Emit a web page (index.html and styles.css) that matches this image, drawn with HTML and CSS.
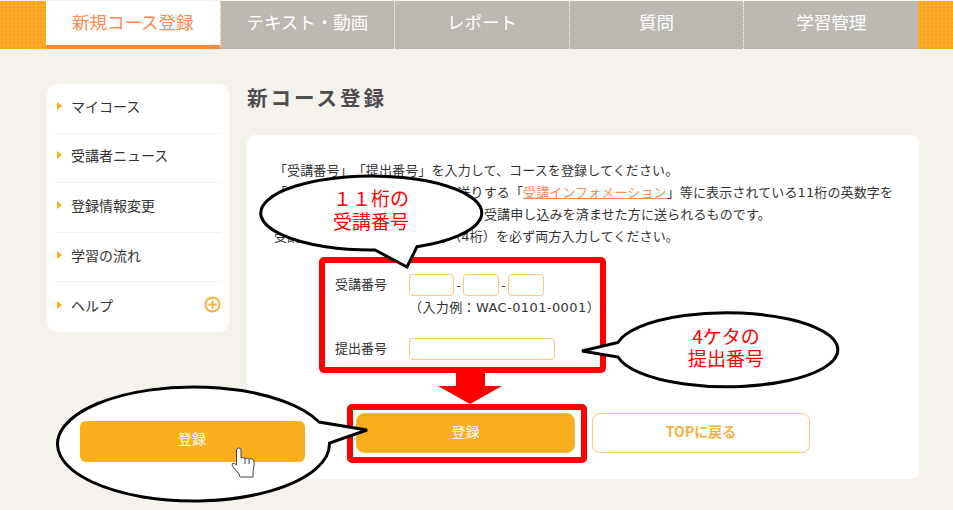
FILE: index.html
```html
<!DOCTYPE html>
<html lang="ja">
<head>
    <meta charset="UTF-8">
    <meta name="viewport" content="width=device-width, initial-scale=1.0">
    <title>新コース登録</title>
    <link rel="stylesheet" href="styles.css">
</head>
<body>
<div class="page">
    <header class="global-nav">
        <div class="nav-end nav-end-left"></div>
        <a class="nav-tab active" href="#">新規コース登録</a>
        <a class="nav-tab" href="#">テキスト・動画</a>
        <a class="nav-tab" href="#">レポート</a>
        <a class="nav-tab" href="#">質問</a>
        <a class="nav-tab last" href="#">学習管理</a>
        <div class="nav-end nav-end-right"></div>
    </header>

    <div class="content">
        <aside class="side-menu">
            <ul>
                <li><a href="#">マイコース</a></li>
                <li><a href="#">受講者ニュース</a></li>
                <li><a href="#">登録情報変更</a></li>
                <li><a href="#">学習の流れ</a></li>
                <li>
                    <a href="#">ヘルプ</a>
                    <svg class="plus-icon" width="17" height="17" viewBox="0 0 17 17">
                        <circle cx="8.5" cy="8.5" r="7" fill="none" stroke="#fbb03b" stroke-width="2"/>
                        <path d="M8.5 4.5v8M4.5 8.5h8" fill="none" stroke="#fbb03b" stroke-width="2"/>
                    </svg>
                </li>
            </ul>
        </aside>

        <main class="main">
            <h1>新コース登録</h1>
            <div class="card">
                <p class="lead">「受講番号」「提出番号」を入力して、コースを登録してください。</p>
                <p class="lead">「受講番号」は、当協会よりお送りする「<a href="#">受講インフォメーション</a>」等に表示されている11桁の英数字を</p>
                <p class="lead">「提出番号」は、インターネットで受講申し込みを済ませた方に送られるものです。</p>
                <p class="lead">受講番号（11桁）と提出番号（4桁）を必ず両方入力してください。</p>

                <form class="course-form">
                    <div class="form-row">
                        <label class="form-label">受講番号</label>
                        <div class="code-inputs">
                            <input class="field field-first" type="text">
                            <span class="hyphen">-</span>
                            <input class="field field-second" type="text">
                            <span class="hyphen">-</span>
                            <input class="field field-third" type="text">
                        </div>
                    </div>
                    <p class="form-note">（入力例：WAC-0101-0001）</p>
                    <div class="form-row form-row-submit">
                        <label class="form-label">提出番号</label>
                        <input class="field field-wide" type="text">
                    </div>
                    <div class="form-buttons">
                        <button class="btn btn-primary" type="button">登録</button>
                        <button class="btn btn-outline" type="button">TOPに戻る</button>
                    </div>
                </form>
            </div>
        </main>
    </div>

    <!-- 説明用の吹き出しと赤枠 -->
    <svg class="notes" width="953" height="510" viewBox="0 0 953 510">
        <rect class="red-box" x="322" y="260" width="281" height="110" rx="2"/>
        <rect class="red-box" x="350" y="407" width="234" height="53" rx="2"/>
        <path class="red-arrow" d="M456 367H485V386H502L470 404L438 386H456Z"/>

        <path class="bubble" d="M417 246.7L407 267L375 250A110.5 37 0 1 1 417 246.7Z"/>
        <text class="bubble-text" x="371" y="206">１１桁の</text>
        <text class="bubble-text" x="371" y="229">受講番号</text>

        <path class="bubble" d="M582 351L618 357A111 37 0 1 0 618 342.5Z"/>
        <text class="bubble-text" x="726" y="344">4ケタの</text>
        <text class="bubble-text" x="726" y="366">提出番号</text>

        <path class="bubble" d="M367 430L329.5 443A136 57 0 1 1 319 422Z"/>
        <rect class="sample-btn" x="80" y="421" width="225" height="41" rx="6"/>
        <text class="sample-btn-text" x="192" y="444">登録</text>
        <path class="hand" d="M236.5 450Q236.5 448 238.8 448Q241 448 241 450V458Q243.5 457 245 458.5Q247.5 457.5 249 459Q252 458 253.5 460Q254.5 461 254 466L253 472V477H240L239 474L233 467Q231.5 465 232.5 463.5Q234.5 462.5 236.5 465ZM245 459V464M249 459.5V464"/>
    </svg>
</div>
</body>
</html>
```

FILE: styles.css
```css
* {
    box-sizing: border-box;
}

body, html {
    margin: 0;
    padding: 0;
    background-color: #f5f2ed;
    font-family: "Noto Sans CJK JP", "Noto Sans", sans-serif;
    color: #333;
    text-spacing-trim: space-all;
}

.page {
    position: relative;
    width: 953px;
    height: 510px;
    padding-top: 1px;
    overflow: hidden;
}

/* グローバルナビ */
.global-nav {
    display: flex;
    height: 48px;
}

.nav-end {
    background-color: #fdaa28;
    background-image: radial-gradient(#f7a221 1px, transparent 1px);
    background-size: 4px 4px;
}

.nav-end-left {
    width: 46px;
}

.nav-end-right {
    width: 35px;
}

.nav-tab {
    flex: 1;
    display: flex;
    align-items: center;
    justify-content: center;
    padding-bottom: 7px;
    background-color: #bcb8b2;
    border-right: 1px dotted #fff;
    color: #fff;
    font-size: 17.5px;
    text-decoration: none;
}

.nav-tab.last {
    border-right: 0;
}

.nav-tab.active {
    background-color: #fff;
    border-right: 1px dotted #fbb03b;
    border-bottom: 4px solid #ff8a3d;
    padding-bottom: 3px;
    color: #ff8a50;
}

.content {
    display: flex;
    align-items: flex-start;
    gap: 18px;
    padding: 35px 34px 0 47px;
}

/* サイドメニュー */
.side-menu {
    flex-shrink: 0;
    width: 182px;
    height: 248px;
    padding: 0 8px;
    background-color: #fff;
    border-radius: 10px;
}

.side-menu ul {
    list-style-type: none;
    margin: 0;
    padding: 0;
}

.side-menu li {
    display: flex;
    align-items: center;
    justify-content: space-between;
    height: 49.6px;
    padding: 0 0 5px 2px;
    border-bottom: 1px dotted #f3e6d2;
}

.side-menu li:last-child {
    border-bottom: 0;
}

.side-menu li a {
    display: flex;
    align-items: center;
    color: #333;
    font-size: 14px;
    text-decoration: none;
}

.side-menu li a::before {
    content: "";
    margin-right: 9px;
    border-left: 5px solid #fbab18;
    border-top: 4.5px solid transparent;
    border-bottom: 4.5px solid transparent;
}

.plus-icon {
    display: block;
}

/* メイン */
.main {
    flex: 1;
    min-width: 0;
}

.main h1 {
    margin: 0 0 25px;
    height: 26px;
    color: #4d4d4d;
    font-size: 20.5px;
    line-height: 26px;
    letter-spacing: 3px;
}

.card {
    height: 344px;
    padding: 25px 27px 0;
    background-color: #fff;
    border-radius: 8px;
}

.lead {
    margin: 0;
    font-family: "DejaVu Sans", "Noto Sans CJK JP", sans-serif;
    font-size: 13px;
    line-height: 22px;
    letter-spacing: 0.12px;
    white-space: nowrap;
}

.lead a {
    color: #ff8a50;
}

.course-form {
    margin-top: 26px;
    padding-left: 61px;
}

.form-row {
    display: flex;
    align-items: center;
}

.form-row-submit {
    margin-top: 20px;
}

.form-label {
    width: 74px;
    padding-bottom: 3px;
    font-size: 13px;
}

.code-inputs {
    display: flex;
    align-items: center;
}

.field {
    display: block;
    height: 22px;
    padding: 0;
    background-color: #fff;
    border: 1px solid #fcc878;
    border-radius: 4px;
}

.field-first {
    width: 45px;
}

.field-second {
    width: 36px;
}

.field-third {
    width: 36px;
}

.field-wide {
    width: 146px;
}

.hyphen {
    width: 9px;
    font-size: 13px;
    line-height: 22px;
    text-align: center;
}

.form-note {
    margin: 0;
    padding: 2px 0 0 74px;
    font-family: "DejaVu Sans", "Noto Sans CJK JP", sans-serif;
    font-size: 13px;
    line-height: 20px;
    letter-spacing: 0.4px;
    white-space: nowrap;
}

.form-buttons {
    display: flex;
    gap: 17px;
    margin: 53px 0 0 21px;
}

.btn {
    width: 219px;
    height: 40px;
    padding: 0 0 5px;
    border-radius: 8px;
    font-family: inherit;
    font-size: 14px;
}

.btn-primary {
    background-color: #f9ae1e;
    border: 1px solid #fbb938;
    color: #fff;
}

.btn-outline {
    width: 218px;
    background-color: #fff;
    border: 1px solid #fcc878;
    color: #fbb03b;
    font-weight: bold;
}

/* 説明用の注釈 */
.notes {
    position: absolute;
    top: 0;
    left: 0;
}

.red-box {
    fill: none;
    stroke: #f00;
    stroke-width: 6px;
}

.red-arrow {
    fill: #f00;
}

.bubble {
    fill: #fff;
    stroke: #000;
    stroke-width: 3px;
    stroke-linejoin: miter;
}

.bubble-text {
    fill: #f00;
    font-size: 19px;
    text-anchor: middle;
}

.sample-btn {
    fill: #f9ae1e;
}

.sample-btn-text {
    fill: #fff;
    font-size: 14px;
    text-anchor: middle;
}

.hand {
    fill: #fff;
    stroke: #444;
    stroke-width: 1px;
}
```
